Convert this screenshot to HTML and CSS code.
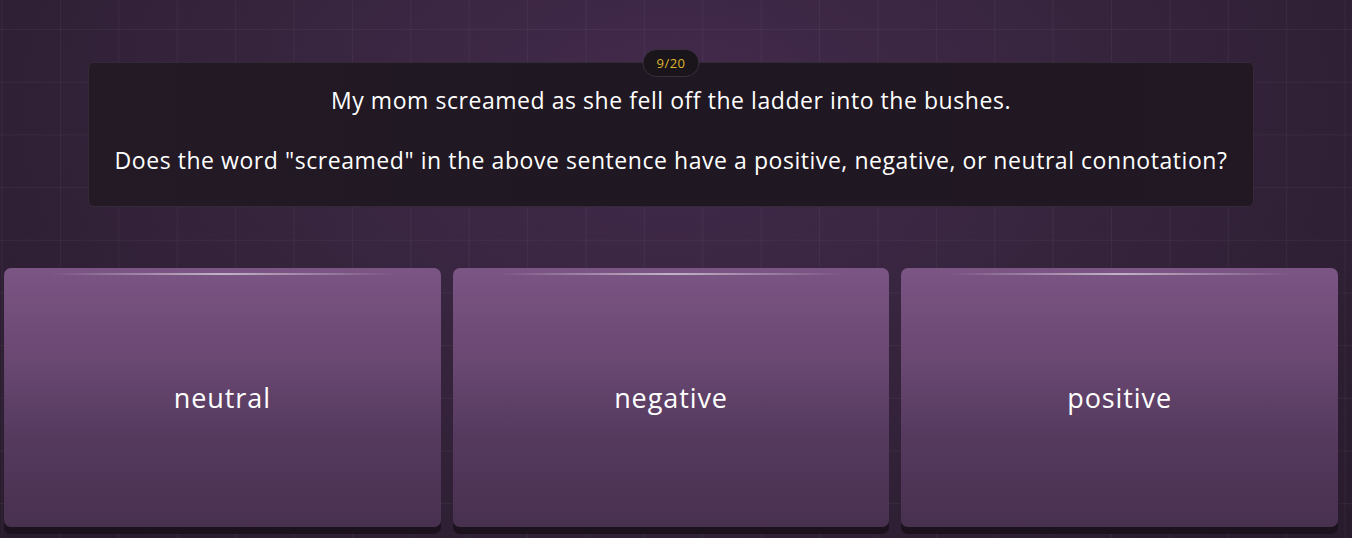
FILE: index.html
```html
<!DOCTYPE html>
<html lang="en">
<head>
    <meta charset="UTF-8">
    <meta name="viewport" content="width=device-width, initial-scale=1.0">
    <title>Quiz</title>
    <link rel="stylesheet" href="styles.css">
</head>
<body>
    <div class="stage">
        <div class="question-wrap">
            <div class="counter">9/20</div>
            <div class="question-card">
                <p>My mom screamed as she fell off the ladder into the bushes.</p>
                <p>&nbsp;</p>
                <p>Does the word "screamed" in the above sentence have a positive, negative, or neutral connotation?</p>
            </div>
        </div>

        <div class="answers">
            <button class="answer">neutral</button>
            <button class="answer">negative</button>
            <button class="answer">positive</button>
        </div>
    </div>
</body>
</html>
```

FILE: styles.css
```css
* {
    margin: 0;
    padding: 0;
    box-sizing: border-box;
    font-family: 'Open Sans', sans-serif;
}

html, body {
    height: 100%;
}

body {
    color: #fff;
    background-color: #2f2034;
    background-image:
        linear-gradient(rgba(255, 255, 255, 0.045) 1px, transparent 1px),
        linear-gradient(90deg, rgba(255, 255, 255, 0.045) 1px, transparent 1px),
        radial-gradient(ellipse at 50% 20%, #432a4d 0%, #36243d 45%, #281b2c 100%);
    background-size: 58.4px 52.7px, 58.4px 52.7px, 100% 100%;
    background-position: 1.6px 29px, 1.6px 29px, 0 0;
    overflow: hidden;
}

.stage {
    padding: 49px 14px 0 4px;
}

.question-wrap {
    position: relative;
    margin: 0 84px;
    padding-top: 13px;
}

.counter {
    position: absolute;
    top: 0;
    left: 50%;
    transform: translateX(-50%);
    background: #1a141b;
    border: 1px solid #3b3040;
    border-radius: 14px;
    color: #dcb42c;
    font-size: 13px;
    letter-spacing: 0.5px;
    line-height: 26px;
    padding: 0 13px;
    z-index: 1;
}

.question-card {
    background: linear-gradient(90deg, #231a25 0%, #1f1721 50%, #211823 100%);
    border: 1px solid #342a37;
    border-radius: 6px;
    height: 145px;
    padding-top: 22px;
    text-align: center;
    font-size: 23px;
    letter-spacing: 0.55px;
    line-height: 30px;
}

.answers {
    display: grid;
    grid-template-columns: repeat(3, 1fr);
    gap: 12px;
    margin-top: 61px;
}

.answer {
    position: relative;
    height: 259px;
    border: none;
    border-radius: 7px;
    background: linear-gradient(180deg, #7b5584 0%, #6a4872 35%, #553a5e 65%, #48304f 100%);
    box-shadow: 0 7px 0 #1c121e;
    color: #fff;
    font-size: 27px;
    letter-spacing: 0.9px;
    cursor: pointer;
}

.answer::before {
    content: '';
    position: absolute;
    top: 5px;
    left: 10%;
    right: 10%;
    height: 2px;
    background: linear-gradient(90deg, transparent, rgba(255, 255, 255, 0.55), transparent);
}
```
